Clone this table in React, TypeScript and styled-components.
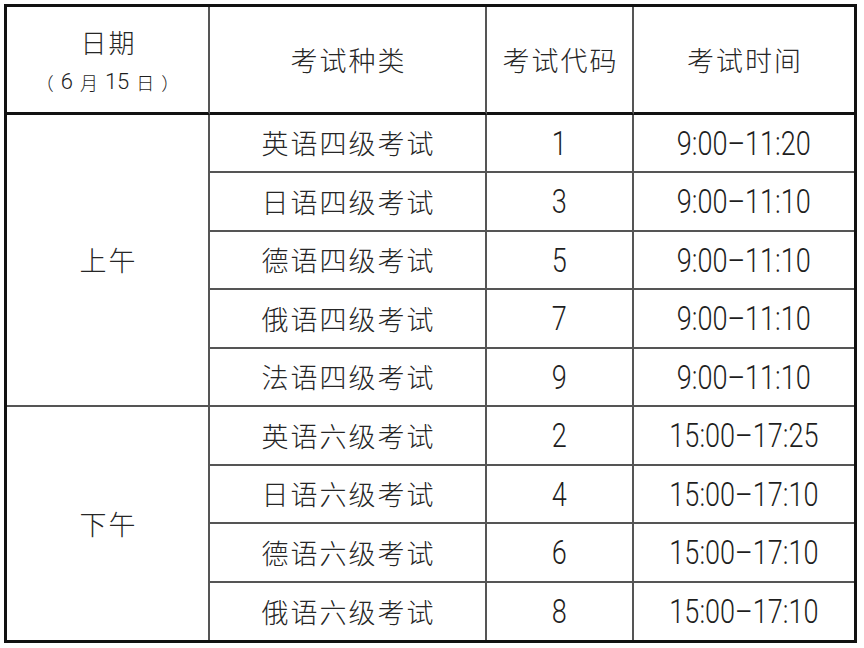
import React from "react";
import styled, { createGlobalStyle } from "styled-components";

const GlobalStyle = createGlobalStyle`
  html, body { margin: 0; padding: 0; background: #ffffff; }
  * { box-sizing: border-box; }
`;

const Page = styled.div`
  padding: 4px;
  background: #ffffff;
`;

const Grid = styled.div`
  display: grid;
  width: 853px;
  border: 3px solid #111;
  grid-template-columns: 203px 277px 147px 220px;
  grid-template-rows: 108px 58px 59px 58px 59px 58px 59px 58px 59px 57px;
`;

const Cell = styled.div<{ $last?: boolean; $noBottom?: boolean; $head?: boolean; $span?: number }>`
  display: flex;
  flex-direction: column;
  align-items: center;
  justify-content: center;
  border-right: ${(p) => (p.$last ? "none" : "2px solid #555")};
  border-bottom: ${(p) => (p.$noBottom ? "none" : p.$head ? "3px solid #111" : "2px solid #555")};
  grid-row: ${(p) => (p.$span ? `span ${p.$span}` : "auto")};
  color: #2b2b2b;
`;

const Han = styled.span<{ $size?: number }>`
  font-family: "Noto Sans CJK SC", "Noto Sans", sans-serif;
  font-weight: 300;
  font-size: ${(p) => p.$size ?? 27}px;
  letter-spacing: 2px;
  padding-left: 2px;
  line-height: 1.1;
  color: #262626;
`;

const Num = styled.span`
  display: inline-block;
  font-family: Roboto, "Liberation Sans", Arial, sans-serif;
  font-weight: 300;
  font-size: 33px;
  line-height: 1;
  color: #1e1e1e;
  transform: scaleX(0.82);
`;

const DateHead = styled.div`
  display: flex;
  flex-direction: column;
  align-items: center;
  gap: 14px;
  padding-top: 2px;
`;

const Sub = styled.span`
  display: inline-flex;
  align-items: center;
  gap: 7px;
  font-family: Roboto, "Liberation Sans", sans-serif;
  font-weight: 300;
  font-size: 22px;
  line-height: 1;
  color: #1e1e1e;
`;

const SubHan = styled.span`
  font-family: "Noto Sans CJK SC", sans-serif;
  font-weight: 300;
  font-size: 18px;
`;

type Row = { name: string; code: string; time: string };

const morning: Row[] = [
  { name: "英语四级考试", code: "1", time: "9:00–11:20" },
  { name: "日语四级考试", code: "3", time: "9:00–11:10" },
  { name: "德语四级考试", code: "5", time: "9:00–11:10" },
  { name: "俄语四级考试", code: "7", time: "9:00–11:10" },
  { name: "法语四级考试", code: "9", time: "9:00–11:10" },
];

const afternoon: Row[] = [
  { name: "英语六级考试", code: "2", time: "15:00–17:25" },
  { name: "日语六级考试", code: "4", time: "15:00–17:10" },
  { name: "德语六级考试", code: "6", time: "15:00–17:10" },
  { name: "俄语六级考试", code: "8", time: "15:00–17:10" },
];

function Rows({ rows, final }: { rows: Row[]; final?: boolean }) {
  return (
    <>
      {rows.map((r, i) => {
        const nb = final && i === rows.length - 1;
        return (
          <React.Fragment key={r.name}>
            <Cell $noBottom={nb}>
              <Han>{r.name}</Han>
            </Cell>
            <Cell $noBottom={nb}>
              <Num>{r.code}</Num>
            </Cell>
            <Cell $noBottom={nb} $last>
              <Num>{r.time}</Num>
            </Cell>
          </React.Fragment>
        );
      })}
    </>
  );
}

export default function App() {
  return (
    <>
      <GlobalStyle />
      <Page>
        <Grid>
          <Cell $head>
            <DateHead>
              <Han $size={26}>日期</Han>
              <Sub>
                <SubHan>（</SubHan>
                <span>6</span>
                <SubHan>月</SubHan>
                <span>15</span>
                <SubHan>日</SubHan>
                <SubHan>）</SubHan>
              </Sub>
            </DateHead>
          </Cell>
          <Cell $head>
            <Han>考试种类</Han>
          </Cell>
          <Cell $head>
            <Han>考试代码</Han>
          </Cell>
          <Cell $head $last>
            <Han>考试时间</Han>
          </Cell>

          <Cell $span={5}>
            <Han>上午</Han>
          </Cell>
          <Rows rows={morning} />

          <Cell $span={4} $noBottom>
            <Han>下午</Han>
          </Cell>
          <Rows rows={afternoon} final />
        </Grid>
      </Page>
    </>
  );
}
